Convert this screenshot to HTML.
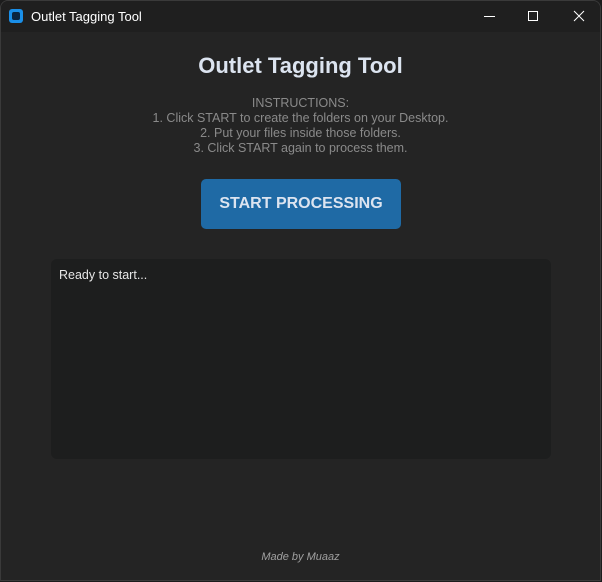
<!DOCTYPE html>
<html><head><style>
body{margin:0;width:602px;height:582px;background:#1c1c1c;font-family:"Liberation Sans",sans-serif;overflow:hidden;position:relative}
.win{position:absolute;left:0;top:0;width:601px;height:581px;background:#242424;border:1px solid #3a3a3a;border-radius:8px 8px 0 0;box-sizing:border-box;overflow:hidden}
.tb{position:absolute;left:0;top:0;right:0;height:31px;background:#1f1f1f}
.ic{position:absolute;left:8px;top:8px;width:14px;height:14px;background:#1a8fe8;border-radius:3px}
.ic:after{content:"";position:absolute;left:3px;top:3px;width:8px;height:8px;background:#0a2540;border-radius:2px}
.tt{position:absolute;left:30px;top:8px;font-size:13px;color:#fff}
.t{position:absolute;left:0;right:0;text-align:center}
</style></head><body>
<div class="win">
<div class="tb"><div class="ic"></div><div class="tt">Outlet Tagging Tool</div>
<svg style="position:absolute;left:480px;top:8px" width="115" height="16"><path d="M3 7.5h11" stroke="#fff" stroke-width="1"/><rect x="47.5" y="2.5" width="9" height="9" fill="none" stroke="#fff"/><path d="M93 2l10 10M103 2l-10 10" stroke="#fff"/></svg>
</div>
<div class="t" style="top:52px;font-size:22px;font-weight:bold;color:#dce4f0">Outlet Tagging Tool</div>
<div class="t" style="top:95px;font-size:12.5px;line-height:15px;color:#8a8a8a">INSTRUCTIONS:<br>1. Click START to create the folders on your Desktop.<br>2. Put your files inside those folders.<br>3. Click START again to process them.</div>
<div style="position:absolute;left:200px;top:178px;width:200px;height:50px;background:#1f6aa5;border-radius:5px;color:#dce4f0;font-weight:bold;font-size:16px;text-align:center;line-height:50px">START PROCESSING</div>
<div style="position:absolute;left:50px;top:258px;width:500px;height:200px;background:#1d1e1e;border-radius:6px"><div style="position:absolute;left:8px;top:9px;font-size:12.5px;color:#e6e6e6">Ready to start...</div></div>
<div class="t" style="top:550px;font-size:11px;font-style:italic;color:#a0a0a0">Made by Muaaz</div>
</div>
</body></html>
